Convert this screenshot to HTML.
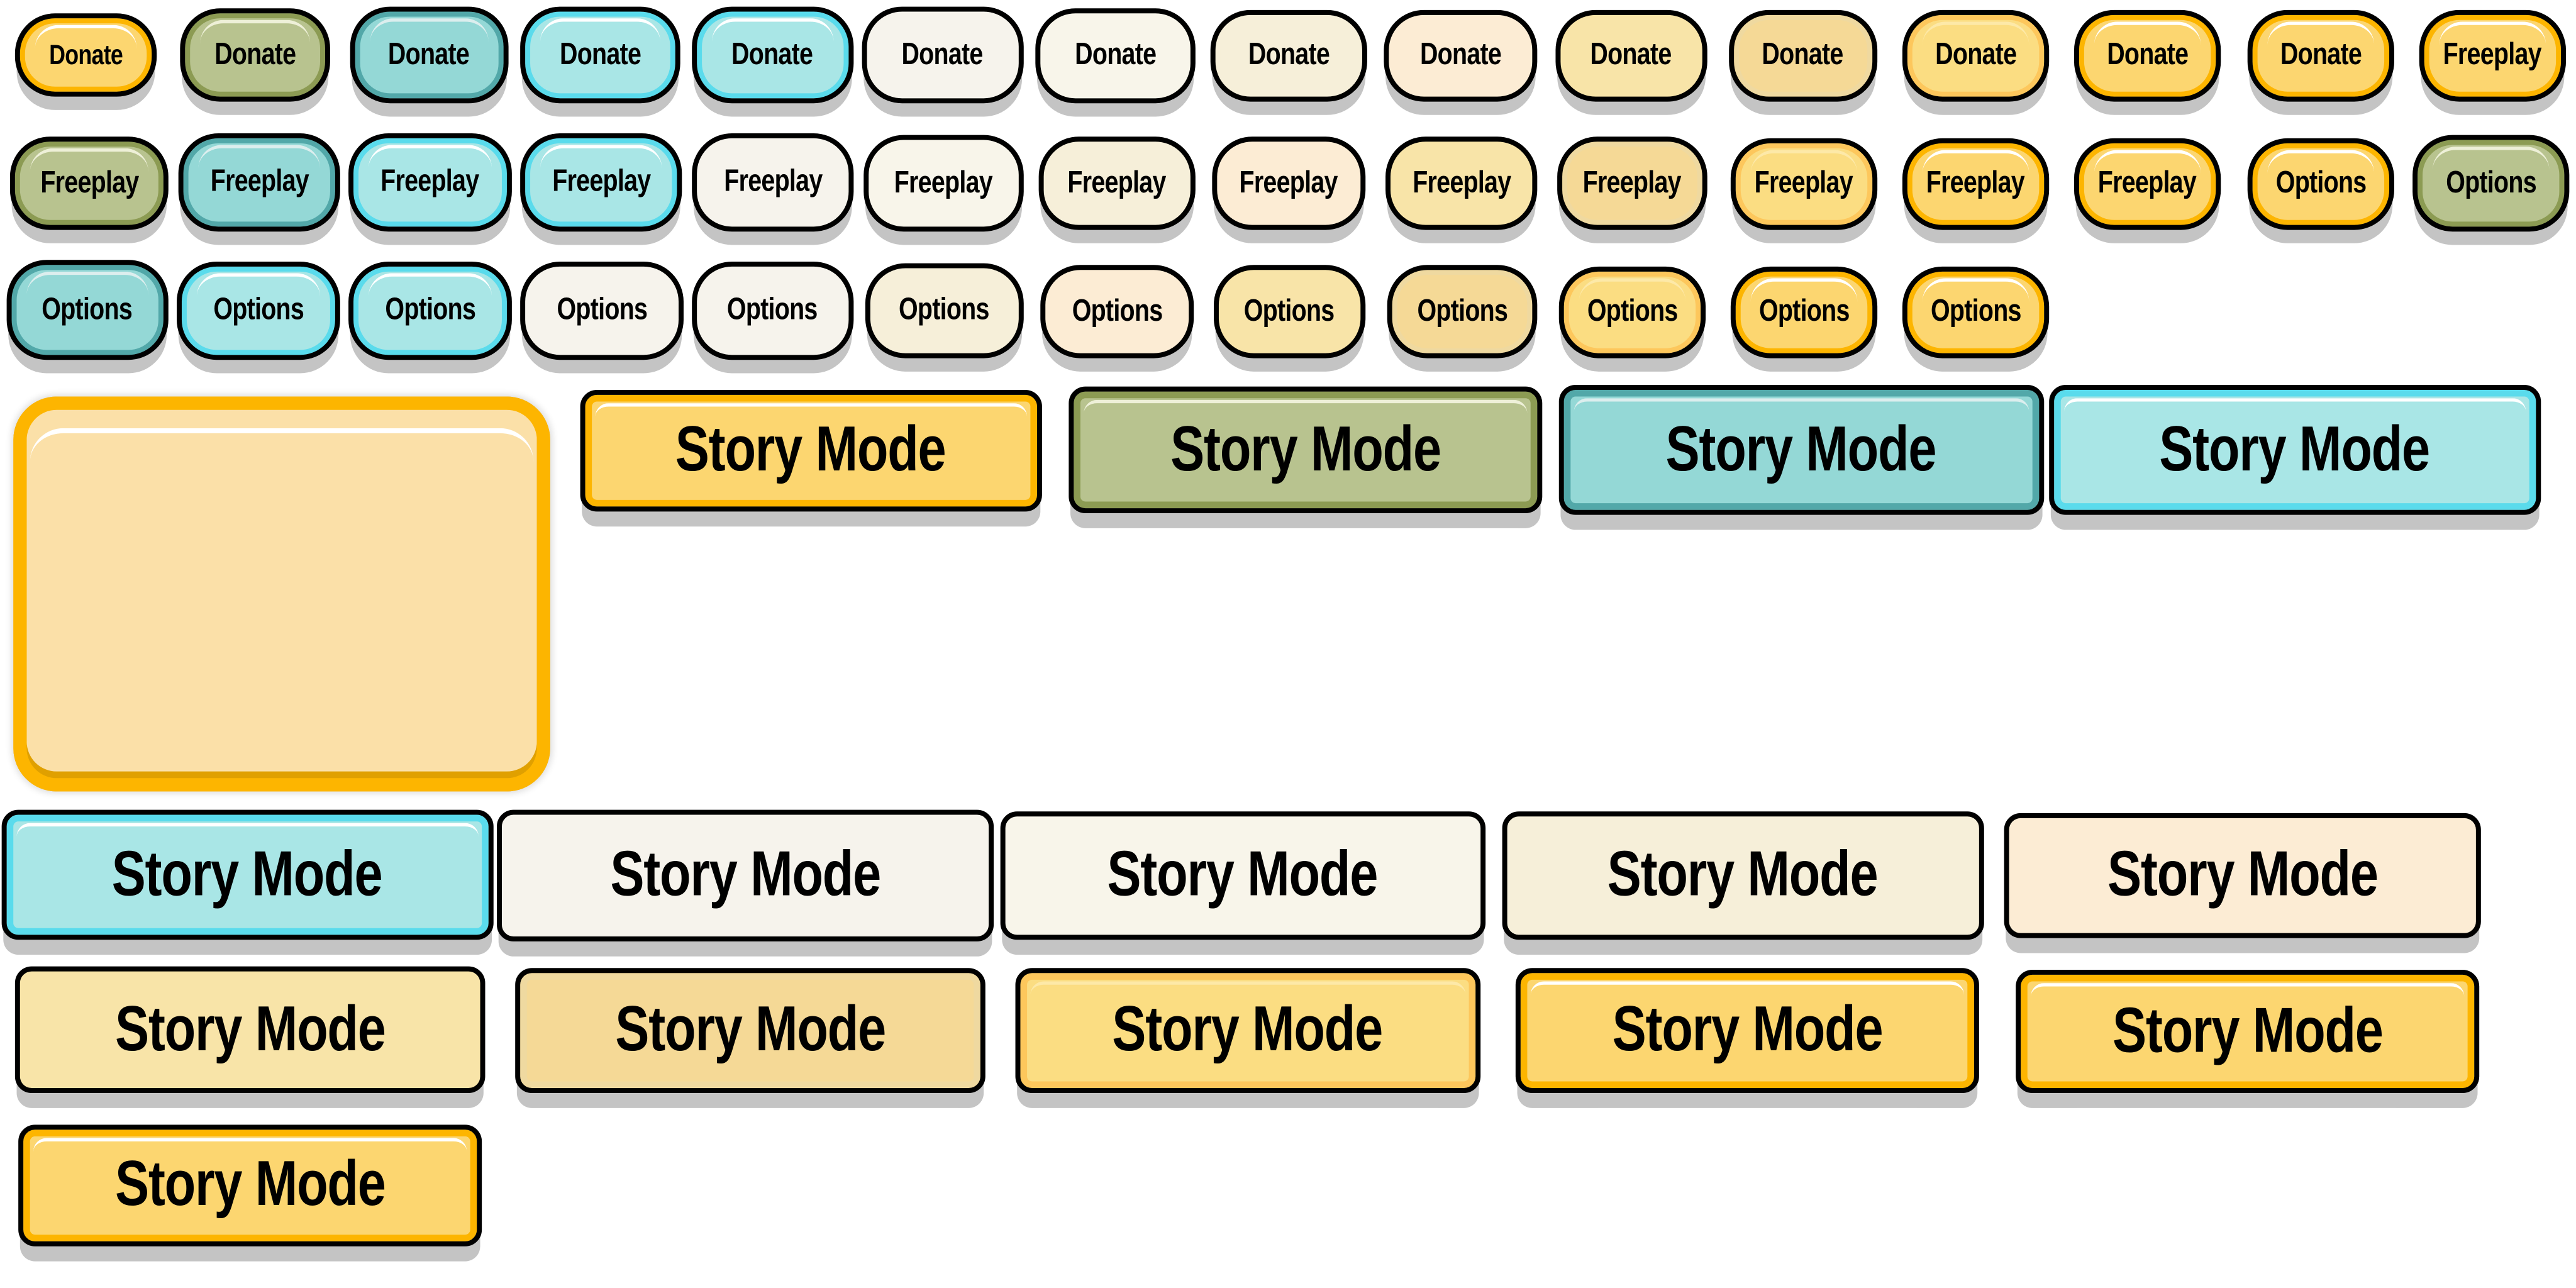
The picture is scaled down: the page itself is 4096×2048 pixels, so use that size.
<!DOCTYPE html>
<html><head><meta charset="utf-8"><style>
html,body{margin:0;padding:0;background:#fff;width:4096px;height:2048px;overflow:hidden}
#s{position:absolute;left:0;top:0;width:1545px;height:773px;transform:scale(2.6511,2.6494);transform-origin:0 0}
.b{position:absolute;box-sizing:border-box;border:3px solid #000;border-radius:24px;display:flex;align-items:center;justify-content:center;font-family:"Liberation Sans",sans-serif;font-weight:bold;font-size:16.5px;letter-spacing:-0.3px;color:#000;background:var(--f);box-shadow:0 9px 0 -1px #c4c4c4,inset 0 0 0 3px var(--r);width:86px;height:54px}
.b span{display:inline-block;transform:scale(0.9,1.12)}
.b::after{content:"";position:absolute;top:4px;left:9px;right:9px;height:14px;border-top:2px solid var(--h);border-radius:14px 14px 0 0}
.st{border-radius:10px;font-size:34px;letter-spacing:-0.5px;box-shadow:0 10px 0 -1px #c4c4c4,inset 0 0 0 4px var(--r)}
.st::after{top:5px;left:6px;right:6px;border-radius:8px 8px 0 0}
.y{--f:#fcd670;--r:#fdb500;--h:#fff}
.y2{--f:#fbdd82;--r:#fdc75c;--h:#fde9a8}
.o{--f:#b8c38f;--r:#8c9b53;--h:#eef0d8}
.t{--f:#94d8d6;--r:#52a8a9;--h:#dceeee}
.c{--f:#a9e6e6;--r:#5adbec;--h:#fff}
.w1{--f:#f6f3ec;--r:#f6f3ec;--h:transparent}
.w2{--f:#f8f5ea;--r:#f8f5ea;--h:transparent}
.w3{--f:#f6efd9;--r:#f6efd9;--h:transparent}
.w4{--f:#fcecd4;--r:#fcecd4;--h:transparent}
.w5{--f:#f8e4a8;--r:#f8e4a8;--h:transparent}
.w6{--f:#f5d996;--r:#efd9a0;--h:transparent}
.panel{position:absolute;left:8px;top:238px;width:322px;height:237px;border-radius:26px;background:#fbe0a8;box-shadow:0 0 4px 1px #ddd,inset 0 0 0 8px #fdb500,inset 0 -4px 0 8px #e0a000}
.panel::after{content:"";position:absolute;left:10px;right:10px;top:19px;height:30px;border-top:3px solid #fff;border-radius:20px 20px 0 0}
</style></head><body><div id="s">
<div class="b y" style="left:9px;top:8px;width:85px;height:50px;font-size:15px"><span>Donate</span></div>
<div class="b o" style="left:108px;top:5px;width:90px;height:56px"><span>Donate</span></div>
<div class="b t" style="left:210px;top:4px;width:95px;height:58px"><span>Donate</span></div>
<div class="b c" style="left:312px;top:4px;width:96px;height:58px"><span>Donate</span></div>
<div class="b c" style="left:415px;top:4px;width:97px;height:58px"><span>Donate</span></div>
<div class="b w1" style="left:517px;top:4px;width:97px;height:58px"><span>Donate</span></div>
<div class="b w2" style="left:621px;top:5px;width:96px;height:57px"><span>Donate</span></div>
<div class="b w3" style="left:726px;top:6px;width:94px;height:55px"><span>Donate</span></div>
<div class="b w4" style="left:830px;top:6px;width:92px;height:55px"><span>Donate</span></div>
<div class="b w5" style="left:933px;top:6px;width:91px;height:55px"><span>Donate</span></div>
<div class="b w6" style="left:1037px;top:6px;width:89px;height:55px"><span>Donate</span></div>
<div class="b y2" style="left:1141px;top:6px;width:88px;height:55px"><span>Donate</span></div>
<div class="b y" style="left:1244px;top:6px;width:88px;height:55px"><span>Donate</span></div>
<div class="b y" style="left:1348px;top:6px;width:88px;height:55px"><span>Donate</span></div>
<div class="b y" style="left:1451px;top:6px;width:88px;height:55px"><span>Freeplay</span></div>
<div class="b o" style="left:6px;top:82px;width:95px;height:56px"><span>Freeplay</span></div>
<div class="b t" style="left:107px;top:80px;width:97px;height:59px"><span>Freeplay</span></div>
<div class="b c" style="left:209px;top:80px;width:98px;height:59px"><span>Freeplay</span></div>
<div class="b c" style="left:312px;top:80px;width:97px;height:59px"><span>Freeplay</span></div>
<div class="b w1" style="left:415px;top:80px;width:97px;height:59px"><span>Freeplay</span></div>
<div class="b w2" style="left:518px;top:81px;width:96px;height:58px"><span>Freeplay</span></div>
<div class="b w3" style="left:623px;top:82px;width:94px;height:56px"><span>Freeplay</span></div>
<div class="b w4" style="left:727px;top:82px;width:92px;height:56px"><span>Freeplay</span></div>
<div class="b w5" style="left:831px;top:82px;width:91px;height:56px"><span>Freeplay</span></div>
<div class="b w6" style="left:934px;top:82px;width:90px;height:56px"><span>Freeplay</span></div>
<div class="b y2" style="left:1038px;top:83px;width:88px;height:55px"><span>Freeplay</span></div>
<div class="b y" style="left:1141px;top:83px;width:88px;height:55px"><span>Freeplay</span></div>
<div class="b y" style="left:1244px;top:83px;width:88px;height:55px"><span>Freeplay</span></div>
<div class="b y" style="left:1348px;top:83px;width:88px;height:55px"><span>Options</span></div>
<div class="b o" style="left:1447px;top:81px;width:94px;height:58px"><span>Options</span></div>
<div class="b t" style="left:4px;top:156px;width:97px;height:60px"><span>Options</span></div>
<div class="b c" style="left:106px;top:157px;width:98px;height:59px"><span>Options</span></div>
<div class="b c" style="left:209px;top:157px;width:98px;height:59px"><span>Options</span></div>
<div class="b w1" style="left:312px;top:157px;width:98px;height:59px"><span>Options</span></div>
<div class="b w1" style="left:415px;top:157px;width:97px;height:59px"><span>Options</span></div>
<div class="b w3" style="left:519px;top:158px;width:95px;height:57px"><span>Options</span></div>
<div class="b w4" style="left:624px;top:159px;width:92px;height:56px"><span>Options</span></div>
<div class="b w5" style="left:728px;top:159px;width:91px;height:56px"><span>Options</span></div>
<div class="b w6" style="left:832px;top:159px;width:90px;height:56px"><span>Options</span></div>
<div class="b y2" style="left:935px;top:160px;width:88px;height:55px"><span>Options</span></div>
<div class="b y" style="left:1038px;top:160px;width:88px;height:55px"><span>Options</span></div>
<div class="b y" style="left:1141px;top:160px;width:88px;height:55px"><span>Options</span></div>
<div class="panel"></div>
<div class="b st y" style="left:348px;top:234px;width:277px;height:73px"><span>Story Mode</span></div>
<div class="b st o" style="left:641px;top:232px;width:284px;height:76px"><span>Story Mode</span></div>
<div class="b st t" style="left:935px;top:231px;width:291px;height:78px"><span>Story Mode</span></div>
<div class="b st c" style="left:1229px;top:231px;width:295px;height:78px"><span>Story Mode</span></div>
<div class="b st c" style="left:1px;top:486px;width:295px;height:78px"><span>Story Mode</span></div>
<div class="b st w1" style="left:298px;top:486px;width:298px;height:79px"><span>Story Mode</span></div>
<div class="b st w2" style="left:600px;top:487px;width:291px;height:77px"><span>Story Mode</span></div>
<div class="b st w3" style="left:901px;top:487px;width:289px;height:77px"><span>Story Mode</span></div>
<div class="b st w4" style="left:1202px;top:488px;width:286px;height:75px"><span>Story Mode</span></div>
<div class="b st w5" style="left:9px;top:580px;width:282px;height:76px"><span>Story Mode</span></div>
<div class="b st w6" style="left:309px;top:581px;width:282px;height:75px"><span>Story Mode</span></div>
<div class="b st y2" style="left:609px;top:581px;width:279px;height:75px"><span>Story Mode</span></div>
<div class="b st y" style="left:909px;top:581px;width:278px;height:75px"><span>Story Mode</span></div>
<div class="b st y" style="left:1209px;top:582px;width:278px;height:74px"><span>Story Mode</span></div>
<div class="b st y" style="left:11px;top:675px;width:278px;height:73px"><span>Story Mode</span></div>
</div></body></html>
